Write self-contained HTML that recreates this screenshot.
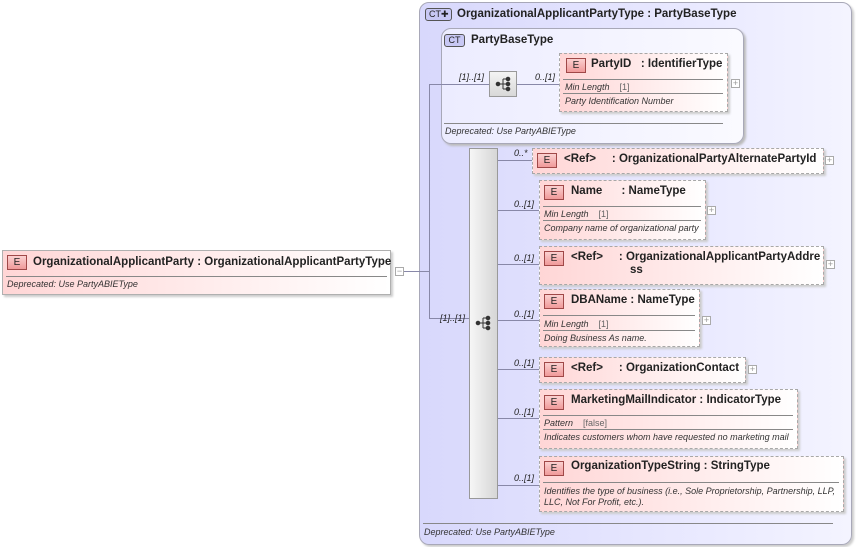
<!DOCTYPE html>
<html><head><meta charset="utf-8"><style>
*{margin:0;padding:0;box-sizing:border-box}
body{width:856px;height:547px;background:#fff;position:relative;overflow:hidden;font-family:"Liberation Sans",sans-serif;color:#222}
.a{position:absolute}
.el{position:absolute;background:linear-gradient(to right,#ffd6d6,#fff3f3 70%,#fff);border:1px dashed #a8a8a8;box-shadow:2px 2px 2px #ccc}
.sol{border:1px solid #b0b0b0}
.b{position:absolute;width:20px;height:15px;border:1px solid #a04848;background:linear-gradient(#fbd0d0,#f09a9a);font-size:10px;text-align:center;line-height:13px;color:#222}
.t{position:absolute;font-size:11.5px;font-weight:bold;white-space:nowrap;color:#222}
.i{position:absolute;font-size:9px;font-style:italic;white-space:nowrap;color:#333}
.hl{position:absolute;height:1px;background:#888}
.ln{position:absolute;background:#8888a8}
.pl{position:absolute;width:9px;height:9px;border:1px solid #aaa;background:#fff;font-size:9px;line-height:7px;text-align:center;color:#999}
.m{position:absolute;font-size:9px;font-style:italic;color:#222;white-space:nowrap}
</style></head><body>
<div class="a" style="left:419px;top:2px;width:433px;height:543px;border:1px solid #a8a8b8;border-radius:10px;background:linear-gradient(to right,#d8d8fc,#ebebff 70%,#f4f4ff);box-shadow:2px 2px 2px #ccc"></div>
<div class="a" style="left:425px;top:8px;width:27px;height:13px;border:1px solid #555;border-radius:3px;background:#c8c8f4;font-size:9px;line-height:11px;padding-left:3px">CT✚</div>
<div class="t" style="left:457px;top:8px">OrganizationalApplicantPartyType : PartyBaseType</div>
<div class="hl" style="left:423px;top:523px;width:410px"></div>
<div class="i" style="left:424px;top:527px">Deprecated: Use PartyABIEType</div>

<div class="a" style="left:441px;top:28px;width:303px;height:116px;border:1px solid #a8a8b8;border-radius:10px;background:linear-gradient(to right,#ececff,#fafaff);box-shadow:2px 2px 2px #bbb"></div>
<div class="a" style="left:444px;top:34px;width:21px;height:13px;border:1px solid #555;border-radius:3px;background:#c8c8f4;font-size:9px;line-height:11px;text-align:center">CT</div>
<div class="t" style="left:471px;top:34px">PartyBaseType</div>
<div class="hl" style="left:444px;top:123px;width:279px"></div>
<div class="i" style="left:445px;top:126px">Deprecated: Use PartyABIEType</div>

<div class="ln" style="left:400px;top:271px;width:30px;height:1px"></div>
<div class="ln" style="left:429px;top:84px;width:1px;height:235px"></div>
<div class="ln" style="left:429px;top:84px;width:60px;height:1px"></div>
<div class="ln" style="left:429px;top:318px;width:40px;height:1px"></div>
<div class="m" style="left:459px;top:72px">[1]..[1]</div>
<div class="m" style="left:440px;top:313px">[1]..[1]</div>
<div class="ln" style="left:517px;top:84px;width:42px;height:1px"></div>
<div class="m" style="left:535px;top:72px">0..[1]</div>

<div class="a" style="left:489px;top:71px;width:28px;height:26px;border:1px solid #999;background:linear-gradient(#f4f4f4,#d8d8d8)"></div>
<svg class="a" style="left:495px;top:75px" width="18" height="18"><g fill="#333" stroke="#333"><circle cx="3" cy="9" r="1.8"/><line x1="3" y1="9" x2="8" y2="9"/><line x1="8" y1="4" x2="8" y2="14"/><line x1="8" y1="4" x2="12" y2="4"/><line x1="8" y1="9" x2="12" y2="9"/><line x1="8" y1="14" x2="12" y2="14"/><circle cx="13" cy="4" r="1.8"/><circle cx="13" cy="9" r="1.8"/><circle cx="13" cy="14" r="1.8"/></g></svg>

<div class="el" style="left:559px;top:53px;width:169px;height:59px"></div>
<div class="b" style="left:566px;top:58px">E</div>
<div class="t" style="left:591px;top:58px">PartyID&nbsp;&nbsp;&nbsp;: IdentifierType</div>
<div class="hl" style="left:563px;top:79px;width:160px"></div>
<div class="i" style="left:565px;top:82px">Min Length&nbsp;&nbsp;&nbsp;&nbsp;<span style="font-style:normal;color:#666">[1]</span></div>
<div class="hl" style="left:563px;top:93px;width:160px"></div>
<div class="i" style="left:565px;top:96px">Party Identification Number</div>
<div class="pl" style="left:731px;top:79px">+</div>

<div class="el sol" style="left:2px;top:250px;width:389px;height:45px"></div>
<div class="b" style="left:7px;top:255px">E</div>
<div class="t" style="left:33px;top:256px">OrganizationalApplicantParty : OrganizationalApplicantPartyType</div>
<div class="hl" style="left:6px;top:276px;width:381px"></div>
<div class="i" style="left:7px;top:279px">Deprecated: Use PartyABIEType</div>
<div class="pl" style="left:395px;top:267px">−</div>

<div class="a" style="left:469px;top:148px;width:29px;height:351px;border:1px solid #999;background:linear-gradient(to right,#f6f6f6,#d6d6d6)"></div>
<svg class="a" style="left:475px;top:314px" width="18" height="18"><g fill="#333" stroke="#333"><circle cx="3" cy="9" r="1.8"/><line x1="3" y1="9" x2="8" y2="9"/><line x1="8" y1="4" x2="8" y2="14"/><line x1="8" y1="4" x2="12" y2="4"/><line x1="8" y1="9" x2="12" y2="9"/><line x1="8" y1="14" x2="12" y2="14"/><circle cx="13" cy="4" r="1.8"/><circle cx="13" cy="9" r="1.8"/><circle cx="13" cy="14" r="1.8"/></g></svg>

<div class="ln" style="left:498px;top:160px;width:34px;height:1px"></div><div class="m" style="left:514px;top:148px">0..*</div>
<div class="ln" style="left:498px;top:210px;width:41px;height:1px"></div><div class="m" style="left:514px;top:199px">0..[1]</div>
<div class="ln" style="left:498px;top:264px;width:41px;height:1px"></div><div class="m" style="left:514px;top:253px">0..[1]</div>
<div class="ln" style="left:498px;top:320px;width:41px;height:1px"></div><div class="m" style="left:514px;top:309px">0..[1]</div>
<div class="ln" style="left:498px;top:369px;width:41px;height:1px"></div><div class="m" style="left:514px;top:358px">0..[1]</div>
<div class="ln" style="left:498px;top:418px;width:41px;height:1px"></div><div class="m" style="left:514px;top:407px">0..[1]</div>
<div class="ln" style="left:498px;top:485px;width:41px;height:1px"></div><div class="m" style="left:514px;top:473px">0..[1]</div>

<div class="el" style="left:532px;top:148px;width:292px;height:26px"></div>
<div class="b" style="left:537px;top:153px">E</div>
<div class="t" style="left:564px;top:153px">&lt;Ref&gt;&nbsp;&nbsp;&nbsp;&nbsp;&nbsp;: OrganizationalPartyAlternatePartyId</div>
<div class="pl" style="left:825px;top:156px">+</div>

<div class="el" style="left:539px;top:180px;width:167px;height:60px"></div>
<div class="b" style="left:544px;top:185px">E</div>
<div class="t" style="left:571px;top:185px">Name&nbsp;&nbsp;&nbsp;&nbsp;&nbsp;&nbsp;: NameType</div>
<div class="hl" style="left:543px;top:206px;width:158px"></div>
<div class="i" style="left:544px;top:209px">Min Length&nbsp;&nbsp;&nbsp;&nbsp;<span style="font-style:normal;color:#666">[1]</span></div>
<div class="hl" style="left:543px;top:220px;width:158px"></div>
<div class="i" style="left:544px;top:223px">Company name of organizational party</div>
<div class="pl" style="left:707px;top:206px">+</div>

<div class="el" style="left:539px;top:246px;width:285px;height:39px"></div>
<div class="b" style="left:544px;top:251px">E</div>
<div class="t" style="left:571px;top:251px">&lt;Ref&gt;&nbsp;&nbsp;&nbsp;&nbsp;&nbsp;: OrganizationalApplicantPartyAddre</div>
<div class="t" style="left:630px;top:264px">ss</div>
<div class="pl" style="left:826px;top:260px">+</div>

<div class="el" style="left:539px;top:289px;width:161px;height:58px"></div>
<div class="b" style="left:544px;top:294px">E</div>
<div class="t" style="left:571px;top:294px">DBAName : NameType</div>
<div class="hl" style="left:543px;top:315px;width:152px"></div>
<div class="i" style="left:544px;top:319px">Min Length&nbsp;&nbsp;&nbsp;&nbsp;<span style="font-style:normal;color:#666">[1]</span></div>
<div class="hl" style="left:543px;top:330px;width:152px"></div>
<div class="i" style="left:544px;top:333px">Doing Business As name.</div>
<div class="pl" style="left:702px;top:316px">+</div>

<div class="el" style="left:539px;top:357px;width:207px;height:26px"></div>
<div class="b" style="left:544px;top:362px">E</div>
<div class="t" style="left:571px;top:362px">&lt;Ref&gt;&nbsp;&nbsp;&nbsp;&nbsp;&nbsp;: OrganizationContact</div>
<div class="pl" style="left:748px;top:365px">+</div>

<div class="el" style="left:539px;top:389px;width:259px;height:60px"></div>
<div class="b" style="left:544px;top:395px">E</div>
<div class="t" style="left:571px;top:394px">MarketingMailIndicator : IndicatorType</div>
<div class="hl" style="left:543px;top:415px;width:250px"></div>
<div class="i" style="left:544px;top:418px">Pattern&nbsp;&nbsp;&nbsp;&nbsp;<span style="font-style:normal;color:#666">[false]</span></div>
<div class="hl" style="left:543px;top:429px;width:250px"></div>
<div class="i" style="left:544px;top:432px">Indicates customers whom have requested no marketing mail</div>

<div class="el" style="left:539px;top:456px;width:305px;height:56px"></div>
<div class="b" style="left:544px;top:461px">E</div>
<div class="t" style="left:571px;top:460px">OrganizationTypeString : StringType</div>
<div class="hl" style="left:543px;top:482px;width:296px"></div>
<div class="i" style="left:544px;top:486px;line-height:11px">Identifies the type of business (i.e., Sole Proprietorship, Partnership, LLP,<br>LLC, Not For Profit, etc.).</div>
</body></html>
